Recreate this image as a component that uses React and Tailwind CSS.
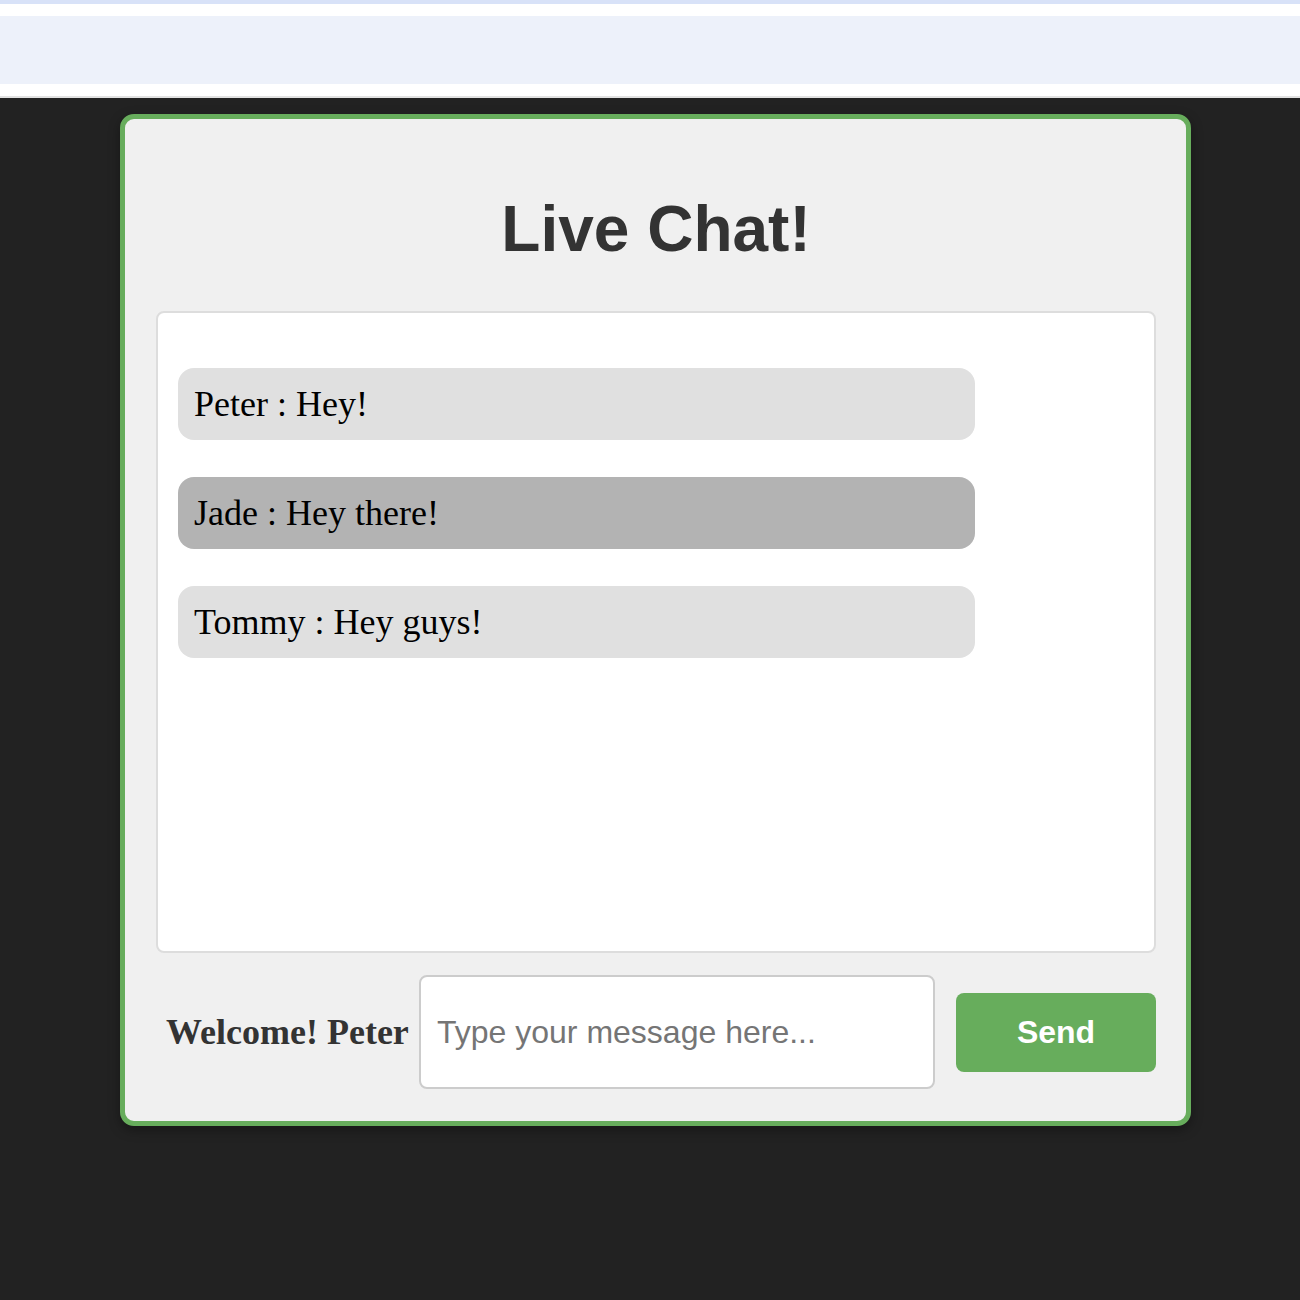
import React from "react";

const messages = [
  { text: "Peter : Hey!", bg: "bg-[#e0e0e0]" },
  { text: "Jade : Hey there!", bg: "bg-[#b3b3b3]" },
  { text: "Tommy : Hey guys!", bg: "bg-[#e0e0e0]" },
];

export default function App() {
  return (
    <div className="min-h-[1300px] bg-[#222222] flex flex-col">
      <div className="bg-white">
        <div className="h-[4px] bg-[#d8e2f8]" />
        <div className="h-[12px]" />
        <div className="h-[68px] bg-[#edf1fa]" />
        <div className="h-[12px]" />
        <div className="h-[2px] bg-[#e2e2e2]" />
      </div>
      <div className="mt-[16px] ml-[120px] w-[1071px] rounded-[14px] border-[5px] border-[#67ad5c] bg-[#f0f0f0] pl-[31px] pr-[30px] pt-[30px] pb-[32px] shadow-[0_4px_12px_rgba(0,0,0,0.35)]">
        <h1
          className="mt-[43px] mb-[45px] text-center text-[64px] font-bold leading-[74px] text-[#333333]"
          style={{ fontFamily: '"Liberation Sans", Arial, sans-serif' }}
        >
          Live Chat!
        </h1>
        <div className="h-[642px] rounded-[8px] border-2 border-[#dddddd] bg-white px-[20px] pt-[55px] flex flex-col gap-[37px]">
          {messages.map((m) => (
            <div
              key={m.text}
              className={`${m.bg} w-[797px] rounded-[16px] px-[16px] py-[15px] text-[36px] leading-[42px] text-black`}
              style={{ fontFamily: '"Liberation Serif", "Times New Roman", serif' }}
            >
              {m.text}
            </div>
          ))}
        </div>
        <div className="mt-[22px] flex items-center">
          <div
            className="w-[251px] shrink-0 pl-[10px] text-[36px] font-bold leading-[42px] text-[#333333] whitespace-nowrap"
            style={{ fontFamily: '"Liberation Serif", "Times New Roman", serif' }}
          >
            Welcome! Peter
          </div>
          <input
            type="text"
            placeholder="Type your message here..."
            className="ml-[12px] h-[114px] w-[516px] rounded-[8px] border-2 border-[#cccccc] bg-white px-[16px] text-[32px] text-black outline-none placeholder:text-[#757575]"
            style={{ fontFamily: '"Liberation Sans", Arial, sans-serif' }}
          />
          <button
            className="ml-[21px] h-[79px] w-[200px] rounded-[8px] bg-[#67ad5c] text-[32px] font-bold text-white"
            style={{ fontFamily: '"Liberation Sans", Arial, sans-serif' }}
          >
            Send
          </button>
        </div>
      </div>
    </div>
  );
}
